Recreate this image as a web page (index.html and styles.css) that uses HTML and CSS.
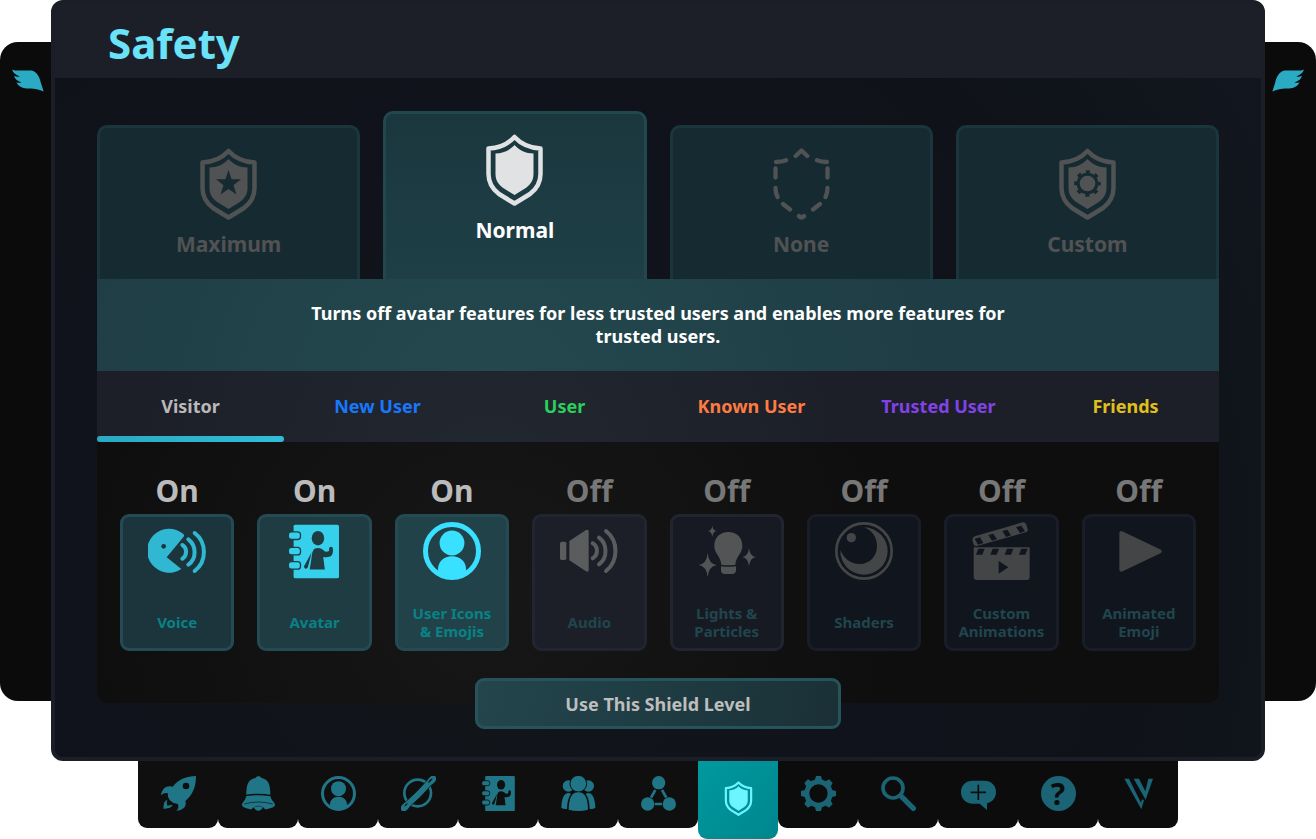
FILE: index.html
```html
<!DOCTYPE html>
<html lang="en">
<head>
    <meta charset="UTF-8">
    <meta name="viewport" content="width=device-width, initial-scale=1">
    <title>Safety</title>
    <link rel="stylesheet" href="styles.css">
</head>
<body>
    <!-- icon sprite -->
    <svg class="sprite" aria-hidden="true">
        <symbol id="wing" viewBox="0 0 96 68">
            <path d="M0 0C4 3 8 4 14 4H58C76 7 83 26 87 42L95 67C80 59 62 58 44 58C30 57 19 51 13 39C18 41 24 41 28 40C17 36 9 31 6 20C12 23 18 23 23 22C10 16 3 11 0 0Z" fill="currentColor"/>
        </symbol>
        <symbol id="shield" viewBox="0 0 57 72">
            <path d="M28.5 3C22 10 13 14 2.500 14.500V40C2.500 50 7 55.500 13 60L28.500 69.500L44 60C50 55.500 54.500 50 54.500 40V14.500C44 14 35 10 28.500 3Z" fill="none" stroke="currentColor" stroke-width="4.500" stroke-linejoin="round"/>
            <path d="M28.500 11C24 16 17 19.500 9.500 19.500V40C9.500 47 13 51 18 54.500L28.500 61L39 54.500C44 51 47.500 47 47.500 40V19.500C40 19.500 33 16 28.500 11Z" fill="currentColor"/>
        </symbol>
        <symbol id="shield-star" viewBox="0 0 57 72">
            <use href="#shield" width="57" height="72"/>
            <path d="M28.500 22L31.600 31.300H41L33.500 37.200L36.500 46.500L28.500 41L20.500 46.500L23.500 37.200L16 31.300H25.400Z" fill="var(--cut)"/>
        </symbol>
        <symbol id="shield-dashed" viewBox="0 0 57 72">
            <path d="M22.700 8L28.500 2.500L34.300 8M3 14Q9 13.800 13 12.200M54 14Q48 13.800 44 12.200M2.500 20.500V29.500M54.500 20.500V29.500M2.500 40Q2.500 45 4.500 49M54.500 40Q54.500 45 52.500 49M10 56L17 61.500M47 56L40 61.500M26 68Q28.500 71 31 68" fill="none" stroke="currentColor" stroke-width="4.300" stroke-linecap="round" stroke-linejoin="round"/>
        </symbol>
        <symbol id="shield-gear" viewBox="0 0 57 72">
            <use href="#shield" width="57" height="72"/>
            <circle cx="28.500" cy="35.500" r="9.300" fill="none" stroke="var(--cut)" stroke-width="3"/>
            <circle cx="28.500" cy="35.500" r="11.500" fill="none" stroke="var(--cut)" stroke-width="3.500" stroke-dasharray="4 5.032" stroke-dashoffset="2"/>
        </symbol>
        <symbol id="voice" viewBox="0 0 174 174">
            <g transform="translate(0 19)">
                <path d="M106 17A66 66 0 1 0 100 122L56 87L107 25Q110 20 106 17Z" fill="currentColor"/>
                <circle cx="47" cy="54" r="7" fill="var(--cut)"/>
                <path d="M103 50C118 58 118 82 103 91M121 33C146 52 146 92 121 109M140 14C177 42 177 100 140 128" fill="none" stroke="currentColor" stroke-width="12" stroke-linecap="round"/>
            </g>
        </symbol>
        <symbol id="avatar" viewBox="0 0 152 163">
            <rect x="14" width="138" height="163" rx="5" fill="currentColor"/>
            <g fill="currentColor" stroke="var(--cut)" stroke-width="4">
                <rect x="-2" y="22" width="37" height="23" rx="9"/>
                <rect x="-2" y="69" width="37" height="23" rx="9"/>
                <rect x="-2" y="112" width="37" height="23" rx="9"/>
            </g>
            <g fill="var(--cut)">
                <ellipse cx="88" cy="41" rx="19" ry="22"/>
                <path d="M76 74Q88 69 98 73C106 76 108 86 120 81C124 79 120 73 123 69Q128 64 133 70C135 82 133 94 124 97Q115 101 104 98L109 136H63L71 84Z"/>
                <path d="M69 84L49 120Q43 126 47 132Q52 136 57 130L63 108Z"/>
            </g>
        </symbol>
        <symbol id="user" viewBox="0 0 105 105">
            <circle cx="52.500" cy="52.500" r="48" fill="none" stroke="currentColor" stroke-width="9"/>
            <circle cx="52.500" cy="38" r="22.500" fill="currentColor"/>
            <path d="M27 91V86C27 72 37 62 52.500 62S78 72 78 86V91Q66 101 52.500 101T27 91Z" fill="currentColor"/>
        </symbol>
        <symbol id="audio" viewBox="0 0 174 174">
            <g transform="translate(0 21)">
                <rect y="38" width="19" height="55" rx="5" fill="currentColor"/>
                <path d="M28 36L78 3Q86 0 86 7V124Q86 131 78 127L28 94Z" fill="currentColor"/>
                <path d="M98 43C115 52 115 78 98 88M117 26C143 44 143 88 117 106M138 6C176 36 176 96 138 126" fill="none" stroke="currentColor" stroke-width="12" stroke-linecap="round"/>
            </g>
        </symbol>
        <symbol id="lights" viewBox="0 0 174 174">
            <g transform="translate(2 11)" fill="currentColor">
                <path d="M89 19C64 19 47 36 47 60C47 84 66 91 68 117Q89 120 110 117C112 91 131 84 131 60C131 36 114 19 89 19Z"/>
                <path d="M67 122Q89 125 112 122V134Q112 145 100 145H79Q67 145 67 134Z"/>
                <path d="M27 82Q30 115 54 118Q30 122 27 154Q24 122 0 118Q24 115 27 82ZM151 68Q154 92 171 94Q154 97 151 121Q148 97 131 94Q148 92 151 68ZM41 0Q43 14 54 16Q43 18 41 33Q39 18 28 16Q39 14 41 0Z"/>
            </g>
        </symbol>
        <symbol id="shaders" viewBox="0 0 174 174">
            <circle cx="87" cy="87" r="83" fill="none" stroke="currentColor" stroke-width="8"/>
            <circle cx="49" cy="47" r="14" fill="currentColor"/>
            <path d="M87 16A71 71 0 1 1 16 84C26 110 48 126 74 126C105 126 126 102 126 72C126 45 110 24 87 16Z" fill="currentColor"/>
        </symbol>
        <symbol id="clapper" viewBox="0 0 174 174">
            <path d="M8 43L152 1Q160 0 163 8L167 22Q168 29 161 31L12 73Q6 72 4 65L1 52Q2 46 8 43ZM5 76H173V165Q173 174 164 174H14Q5 174 5 165Z" fill="currentColor"/>
            <path d="M8 50L24 46L34 63L18 68ZM49 39L64 35L75 52L60 56ZM91 27L106 23L117 40L102 45ZM132 15L148 11L159 28L144 33ZM19 80H38L31 98H12ZM62 80H81L74 98H55ZM105 80H124L117 98H98ZM148 80H167L160 98H141ZM80 117L109 136L80 155Z" fill="var(--cut)"/>
        </symbol>
        <symbol id="play" viewBox="0 0 174 174">
            <path d="M34 33V143L149 88Z" fill="currentColor" stroke="currentColor" stroke-width="12" stroke-linejoin="round"/>
        </symbol>
        <symbol id="rocket" viewBox="0 0 105 105">
            <path d="M105 0C76 1 54 9 35 32C18 27 3 36 0 58Q10 49 21 52Q18 63 28 74Q38 84 50 83Q56 95 46 104C64 104 79 92 73 75C94 58 105 34 105 0ZM19 72C5 78 9 91 7 98C19 98 31 96 35 86Q27 88 19 89Q15 82 19 72Z" fill="currentColor"/>
            <circle cx="75" cy="30" r="10" fill="var(--cut)"/>
        </symbol>
        <symbol id="bell" viewBox="0 0 105 105">
            <path d="M45 5C45-1 60-1 60 5C81 9 88 22 88 56Q52 50 16 56C16 22 23 9 45 5ZM15 61Q52 54 89 61C89 73 102 78 102 87C102 93 86 99 72 100C64 86 40 86 32 100C18 99 3 93 3 87C3 78 15 73 15 61ZM39 94Q52 87 65 94C62 108 42 108 39 94Z" fill="currentColor"/>
            <path d="M10 84Q52 72 95 84" fill="none" stroke="var(--cut)" stroke-width="2"/>
        </symbol>
        <symbol id="planet" viewBox="0 0 105 105">
            <circle cx="50" cy="51" r="40" fill="none" stroke="currentColor" stroke-width="8"/>
            <g transform="rotate(-45 52.500 52.500)">
                <path d="M-21 53C-18 38-4 41 10 43Q52 46 95 43C110 41 123 38 126 52C123 66 110 64 95 62Q52 66 10 62C-4 64-18 67-21 53Z" fill="currentColor" stroke="var(--cut)" stroke-width="2"/>
                <path d="M95 50Q106 45 115 50Q106 55 95 50ZM-6 50Q2 45 10 50Q2 55-6 50Z" fill="var(--cut)"/>
            </g>
        </symbol>
        <symbol id="group" viewBox="0 0 105 105">
            <g fill="currentColor">
                <circle cx="22" cy="30" r="17"/>
                <circle cx="82" cy="30" r="17"/>
                <path d="M1 96C2 70 7 51 24 51L30 54C21 65 19 80 18 99Q8 100 1 96ZM103 96C102 70 97 51 80 51L74 54C83 65 85 80 86 99Q96 100 103 96Z"/>
                <circle cx="52" cy="23" r="25" stroke="var(--cut)" stroke-width="3"/>
                <path d="M23 101C24 67 31 49 52 49S80 67 81 101Q52 109 23 101Z"/>
            </g>
        </symbol>
        <symbol id="network" viewBox="0 0 105 105">
            <g fill="currentColor">
                <circle cx="53" cy="20" r="20"/>
                <circle cx="20" cy="84" r="20"/>
                <circle cx="85" cy="84" r="20"/>
            </g>
            <path d="M43 42L30 65M63 42L76 65M41 84H63" stroke="currentColor" stroke-width="8"/>
        </symbol>
        <symbol id="gear" viewBox="0 0 105 105">
            <circle cx="52.500" cy="52.500" r="35" fill="none" stroke="currentColor" stroke-width="15"/>
            <g fill="currentColor">
                <path id="teeth" d="M45 0H60L64 14H41ZM45 105H60L64 91H41ZM0 45V60L14 64V41ZM105 45V60L91 64V41Z"/>
                <use href="#teeth" transform="rotate(45 52.500 52.500)"/>
            </g>
        </symbol>
        <symbol id="search" viewBox="0 0 105 105">
            <circle cx="36" cy="36" r="30" fill="none" stroke="currentColor" stroke-width="11"/>
            <path d="M61 61L97 97" stroke="currentColor" stroke-width="16" stroke-linecap="round"/>
        </symbol>
        <symbol id="chat" viewBox="0 0 105 105">
            <path d="M36 14H69C91 14 105 28 105 48C105 66 94 78 78 82V102L56 83H36C14 83 0 68 0 48S14 14 36 14Z" fill="currentColor"/>
            <path d="M52 26V72M29 49H75" stroke="var(--cut)" stroke-width="5"/>
        </symbol>
        <symbol id="brand" viewBox="0 0 105 105">
            <path d="M10 8H24L60 80L63 70L69 73L61 100ZM38 8H54L73 46L82 8H96L74 71Z" fill="currentColor"/>
        </symbol>
    </svg>

    <div class="menu">
        <aside class="wing wing-left">
            <button class="wing-btn" aria-label="Open left wing"><svg><use href="#wing"/></svg></button>
        </aside>

        <main class="window">
            <header class="window-header">
                <h1>Safety</h1>
            </header>

            <div class="content">
                <div class="levels">
                    <button class="level"><svg><use href="#shield-star"/></svg>Maximum</button>
                    <button class="level selected"><svg><use href="#shield"/></svg>Normal</button>
                    <button class="level"><svg><use href="#shield-dashed"/></svg>None</button>
                    <button class="level"><svg><use href="#shield-gear"/></svg>Custom</button>
                </div>

                <div class="description">
                    <p>Turns off avatar features for less trusted users and enables more features for trusted users.</p>
                </div>

                <nav class="ranks">
                    <button class="rank visitor selected">Visitor</button>
                    <button class="rank new-user">New User</button>
                    <button class="rank user">User</button>
                    <button class="rank known">Known User</button>
                    <button class="rank trusted">Trusted User</button>
                    <button class="rank friends">Friends</button>
                </nav>

                <section class="features">
                    <div class="feature on">
                        <span class="state">On</span>
                        <button class="toggle"><svg><use href="#voice"/></svg><span class="name">Voice</span></button>
                    </div>
                    <div class="feature on">
                        <span class="state">On</span>
                        <button class="toggle"><svg viewBox="0 0 58 58"><use href="#avatar" x="3" y="2" width="50" height="55"/></svg><span class="name">Avatar</span></button>
                    </div>
                    <div class="feature on">
                        <span class="state">On</span>
                        <button class="toggle"><svg><use href="#user"/></svg><span class="name">User Icons &amp;&nbsp;Emojis</span></button>
                    </div>
                    <div class="feature">
                        <span class="state">Off</span>
                        <button class="toggle"><svg><use href="#audio"/></svg><span class="name">Audio</span></button>
                    </div>
                    <div class="feature">
                        <span class="state">Off</span>
                        <button class="toggle"><svg><use href="#lights"/></svg><span class="name">Lights &amp; Particles</span></button>
                    </div>
                    <div class="feature">
                        <span class="state">Off</span>
                        <button class="toggle"><svg><use href="#shaders"/></svg><span class="name">Shaders</span></button>
                    </div>
                    <div class="feature">
                        <span class="state">Off</span>
                        <button class="toggle"><svg><use href="#clapper"/></svg><span class="name">Custom Animations</span></button>
                    </div>
                    <div class="feature">
                        <span class="state">Off</span>
                        <button class="toggle"><svg><use href="#play"/></svg><span class="name">Animated Emoji</span></button>
                    </div>
                </section>

                <button class="apply">Use This Shield Level</button>
            </div>
        </main>

        <aside class="wing wing-right">
            <button class="wing-btn" aria-label="Open right wing"><svg><use href="#wing"/></svg></button>
        </aside>
    </div>

    <nav class="dock">
        <button class="dock-btn" aria-label="Launch Pad"><svg><use href="#rocket"/></svg></button>
        <button class="dock-btn" aria-label="Notifications"><svg><use href="#bell"/></svg></button>
        <button class="dock-btn" aria-label="Profile"><svg><use href="#user"/></svg></button>
        <button class="dock-btn" aria-label="Worlds"><svg><use href="#planet"/></svg></button>
        <button class="dock-btn" aria-label="Avatars"><svg><use href="#avatar"/></svg></button>
        <button class="dock-btn" aria-label="Social"><svg><use href="#group"/></svg></button>
        <button class="dock-btn" aria-label="Groups"><svg><use href="#network"/></svg></button>
        <button class="dock-btn active" aria-label="Safety"><svg><use href="#shield"/></svg></button>
        <button class="dock-btn" aria-label="Settings"><svg><use href="#gear"/></svg></button>
        <button class="dock-btn" aria-label="Search"><svg><use href="#search"/></svg></button>
        <button class="dock-btn" aria-label="Feedback"><svg><use href="#chat"/></svg></button>
        <button class="dock-btn" aria-label="Help"><span class="help-mark">?</span></button>
        <button class="dock-btn" aria-label="VRChat"><svg><use href="#brand"/></svg></button>
    </nav>
</body>
</html>
```

FILE: styles.css
```css
* {
    box-sizing: border-box;
}

body {
    margin: 0;
    background-color: #fff;
    font-family: "Noto Sans", sans-serif;
    font-weight: 700;
}

button {
    margin: 0;
    padding: 0;
    border: none;
    background: none;
    color: inherit;
    font: inherit;
    cursor: pointer;
}

svg {
    display: block;
}

.sprite {
    position: absolute;
    width: 0;
    height: 0;
}

/* window and wings */
.menu {
    display: flex;
}

.wing {
    flex: 0 0 51px;
    display: flex;
    align-items: flex-start;
    margin: 42px 0 60px;
    background-color: #0b0b0b;
    color: #2babc3;
}

.wing-left {
    padding: 27px 0 0 12px;
    border-radius: 18px 0 0 18px;
}

.wing-right {
    justify-content: flex-end;
    padding: 27px 12px 0 0;
    border-radius: 0 18px 18px 0;
}

.wing svg {
    width: 32px;
    height: 23px;
}

.wing-right svg {
    transform: scaleX(-1);
}

.window {
    flex: 1;
    min-width: 0;
    border: 4px solid #1b1e27;
    border-radius: 12px;
    background: radial-gradient(circle at 35% 75%, #121619, #10131b 40%, #0f1219 70%, #12171f);
}

.window-header {
    height: 74px;
    padding: 0 53px;
    border-radius: 8px 8px 0 0;
    background-color: #1d1f28;
}

.window-header h1 {
    margin: 0;
    color: #6ae3f9;
    font-size: 42px;
    line-height: 78px;
}

.content {
    display: flex;
    flex-direction: column;
    padding: 33px 42px 28px;
}

/* shield levels */
.levels {
    display: grid;
    grid-template-columns: repeat(4, 1fr);
    gap: 23px;
    align-items: end;
}

.level {
    --cut: #162b31;
    display: flex;
    flex-direction: column;
    align-items: center;
    gap: 10px;
    height: 154px;
    padding-top: 20px;
    border: 3px solid #1a353b;
    border-bottom: none;
    border-radius: 10px 10px 0 0;
    background-color: #162b31;
    color: #515253;
    font-size: 21px;
    line-height: 28px;
}

.level.selected {
    height: 168px;
    border-color: #22474f;
    background: linear-gradient(#1b373e, #1e3f46);
    color: #fff;
}

.level svg {
    width: 57px;
    height: 72px;
}

.level.selected svg {
    color: #e1e2e3;
}

.description {
    padding: 23px 20px;
    background: radial-gradient(circle at 35% 150%, #24494f, #1f3d45 60%);
    color: #fff;
    font-size: 18px;
    line-height: 23px;
    text-align: center;
}

.description p {
    max-width: 740px;
    margin: 0 auto;
}

/* trust ranks */
.ranks {
    display: grid;
    grid-template-columns: repeat(6, 1fr);
    height: 71px;
    background: radial-gradient(circle at 35% 150%, #222830, #1c1f28 50%);
}

.rank {
    padding-top: 4px;
    border-bottom: 5px solid transparent;
    font-size: 18px;
}

.rank.selected {
    position: relative;
}

.rank.selected::after {
    content: "";
    position: absolute;
    right: 0;
    bottom: -5px;
    left: 0;
    height: 6px;
    border-radius: 3px;
    background: linear-gradient(90deg, #2aa9c2, #31bdd9);
}

.visitor { color: #b9b9b9; }
.new-user { color: #1778ff; }
.user { color: #2bcf5c; }
.known { color: #ff7b42; }
.trusted { color: #8143e6; }
.friends { color: #e0c01a; }

/* feature toggles */
.features {
    display: grid;
    grid-template-columns: repeat(8, 1fr);
    gap: 23px;
    padding: 25px 23px 52px;
    border-radius: 0 0 10px 10px;
    background: radial-gradient(circle at 35% 60%, #171717, #0e0e0e 55%);
}

.feature {
    --cut: #11151d;
    display: flex;
    flex-direction: column;
    color: #444546;
}

.state {
    color: #777;
    font-size: 30px;
    line-height: 47px;
    text-align: center;
}

.toggle {
    display: flex;
    flex-direction: column;
    align-items: center;
    height: 137px;
    padding: 5px 6px 0;
    border: 3px solid #191d27;
    border-radius: 9px;
    background-color: var(--cut);
}

.toggle svg {
    flex: none;
    width: 58px;
    height: 58px;
}

.name {
    display: flex;
    align-items: center;
    flex: 1;
    max-width: 92px;
    padding-top: 15px;
    color: #20464d;
    font-size: 15px;
    line-height: 18px;
    text-align: center;
}

.on .state {
    color: #bbb;
}

.on .name {
    color: #088286;
}

.on .toggle {
    border-color: #244b53;
}

.feature:nth-child(1) { --cut: #1c353c; color: #30b8d2; }
.feature:nth-child(2) { --cut: #1f3c43; color: #37d0ec; }
.feature:nth-child(3) { --cut: #224249; color: #3ae0ff; }
.feature:nth-child(4) { --cut: #1c1f28; color: #5b5c5d; }
.feature:nth-child(5) { --cut: #171a23; color: #535455; }

.feature:nth-child(4) .toggle,
.feature:nth-child(5) .toggle {
    border-color: #212530;
}

.apply {
    align-self: center;
    width: 366px;
    max-width: 100%;
    height: 51px;
    margin-top: -25px;
    border: 3px solid #27535a;
    border-radius: 9px;
    background: linear-gradient(100deg, #23454b, #1f3c43 50%, #1a3036);
    color: #bebebe;
    font-size: 18px;
}

/* bottom dock */
.dock {
    display: flex;
    align-items: flex-start;
    justify-content: center;
}

.dock-btn {
    --cut: #0f0f0f;
    flex: 0 1 80px;
    display: flex;
    justify-content: center;
    height: 67px;
    padding-top: 15px;
    border-radius: 0 0 9px 9px;
    background-color: var(--cut);
    color: #207687;
}

.dock-btn svg {
    width: 35px;
    height: 35px;
}

.dock-btn:nth-child(n+9) {
    --cut: #0c0c0c;
    color: #1a6475;
}

.dock-btn.active {
    --cut: #00868d;
    height: 78px;
    padding-top: 20px;
    background: linear-gradient(135deg, #00999f, #00868d);
    color: #6df5ff;
}

.help-mark {
    width: 35px;
    height: 35px;
    border-radius: 50%;
    background-color: #1a6475;
    color: var(--cut);
    font-size: 30px;
    line-height: 35px;
    text-align: center;
}
```
